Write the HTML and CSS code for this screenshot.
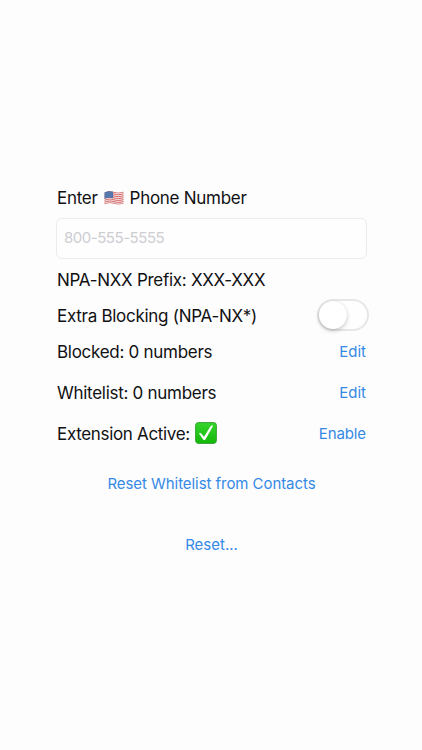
FILE: index.html
```html
<!DOCTYPE html>
<html lang="en">
<head>
<meta charset="utf-8">
<meta name="viewport" content="width=device-width, initial-scale=1">
<title>Call Blocking</title>
<link rel="stylesheet" href="styles.css">
</head>
<body>
<main class="screen">
  <label class="title" for="phone"><span>Enter</span>
    <svg class="flag" viewBox="0 0 20 16" aria-hidden="true">
      <defs>
        <clipPath id="wave"><path d="M.5 2.500C4 .7 7 .9 10 1.800s6 1 9.500-.4v12c-3.500 1.500-6.500 1.300-9.500.4S4 13 .5 14.500Z"/></clipPath>
      </defs>
      <g clip-path="url(#wave)">
        <path fill="#f3e6e5" d="M0 0h20v16H0z"/>
        <g fill="none" stroke="#d66768" stroke-width="1">
          <path d="M0 2.900C4 1 7 1.300 10 2.200s6 1 10-.4"/>
          <path d="M0 4.800C4 2.900 7 3.200 10 4.100s6 1 10-.4"/>
          <path d="M0 6.700C4 4.800 7 5.100 10 6s6 1 10-.4"/>
          <path d="M0 8.600C4 6.700 7 7 10 7.900s6 1 10-.4"/>
          <path d="M0 10.500C4 8.600 7 8.900 10 9.800s6 1 10-.4"/>
          <path d="M0 12.400C4 10.500 7 10.800 10 11.700s6 1 10-.4"/>
          <path d="M0 14.300C4 12.400 7 12.700 10 13.600s6 1 10-.4"/>
        </g>
        <path fill="#4d70a8" d="M0 0h9v8.200C6 7.300 3 7.600 0 8.900Z"/>
        <path stroke="#a8b9d5" stroke-width=".6" stroke-dasharray=".6 1.200" d="M1.300 3.500 8.500 2.500M1.300 5.300l7.200-1M1.300 7.100l7.200-1"/>
      </g>
    </svg>
    <span>Phone Number</span></label>
  <input class="field" id="phone" type="tel" placeholder="800-555-5555">
  <div class="row prefix"><span>NPA-NXX Prefix: XXX-XXX</span></div>
  <div class="row extra"><span>Extra Blocking (NPA-NX*)</span>
    <button class="switch" type="button" role="switch" aria-checked="false" aria-label="Extra Blocking"><span class="knob"></span></button>
  </div>
  <div class="row blocked"><span>Blocked: 0 numbers</span><a class="link" href="#">Edit</a></div>
  <div class="row"><span>Whitelist: 0 numbers</span><a class="link" href="#">Edit</a></div>
  <div class="row"><span class="status"><span class="extension">Extension Active:</span>
    <svg class="check" viewBox="0 0 22 22" aria-hidden="true">
      <defs><linearGradient id="green" x2="0" y2="1"><stop stop-color="#36d52d"/><stop offset="1" stop-color="#12b807"/></linearGradient></defs>
      <rect x=".6" y=".6" width="20.800" height="20.800" rx="2.800" fill="url(#green)" stroke="#37a334" stroke-width="1"/>
      <path fill="#fff" d="M4 11.500c.8-.8 1.900-.6 2.500.2L9 14.800l6.400-10.400c.6-.9 1.700-1 2.600-.4L10.600 17.300c-.7 1.100-2 1.100-2.700 0Z"/>
    </svg></span><a class="link enable" href="#">Enable</a></div>
  <a class="link reset-list" href="#">Reset Whitelist from Contacts</a>
  <a class="link reset" href="#">Reset...</a>
</main>
</body>
</html>
```
FILE: styles.css
```css
* { box-sizing: border-box; }
body {
  margin: 0;
  background: #fdfdfd;
  color: #111113;
  font-family: Inter, "Liberation Sans", sans-serif;
  font-size: 17px;
  line-height: 24px;
  letter-spacing: -.28px;
}
.screen {
  display: flex;
  flex-direction: column;
  width: 309px;
  height: 750px;
  margin-left: 57px;
  padding-top: 186px;
  white-space: nowrap;
}
.title { display: flex; align-items: center; height: 24px; }
.flag { width: 20px; height: 16px; margin: 0 6px 0 6px; }
.field {
  width: 311px;
  height: 41px;
  margin: 8px 0 0 -1px;
  padding: 0 7px 2px;
  border: 1px solid #ebebed;
  border-radius: 6px;
  outline: none;
  background: #fefefe;
  font: 15px/22px Inter, "Liberation Sans", sans-serif;
  letter-spacing: -.47px;
  color: #111113;
}
.field::placeholder { color: #cdcdd2; opacity: 1; }
.row { display: flex; align-items: center; justify-content: space-between; height: 41px; }
.prefix { height: 36px; margin-top: 3px; }
.extra { height: 36px; }
.blocked { height: 36px; margin-bottom: 2px; }
.switch {
  width: 52px;
  height: 32px;
  margin: -2px -3px 0 0;
  padding: 0;
  border: 2px solid #e7e7e8;
  border-radius: 16px;
  background: #fefefe;
}
.knob {
  display: block;
  width: 28px;
  height: 28px;
  border-radius: 50%;
  background: #fff;
  box-shadow: 0 2px 4px rgba(0, 0, 0, .2), 0 0 1px rgba(0, 0, 0, .12);
}
.status { display: flex; align-items: center; }
.extension { letter-spacing: -.33px; }
.check { width: 22px; height: 22px; margin: -1px 0 0 5px; }
.link { color: #3589e5; font-size: 15px; letter-spacing: 0; text-decoration: none; }
.enable { letter-spacing: -.1px; }
.reset-list { align-self: center; margin-top: 18px; letter-spacing: -.06px; }
.reset { align-self: center; margin-top: 37px; }
```
